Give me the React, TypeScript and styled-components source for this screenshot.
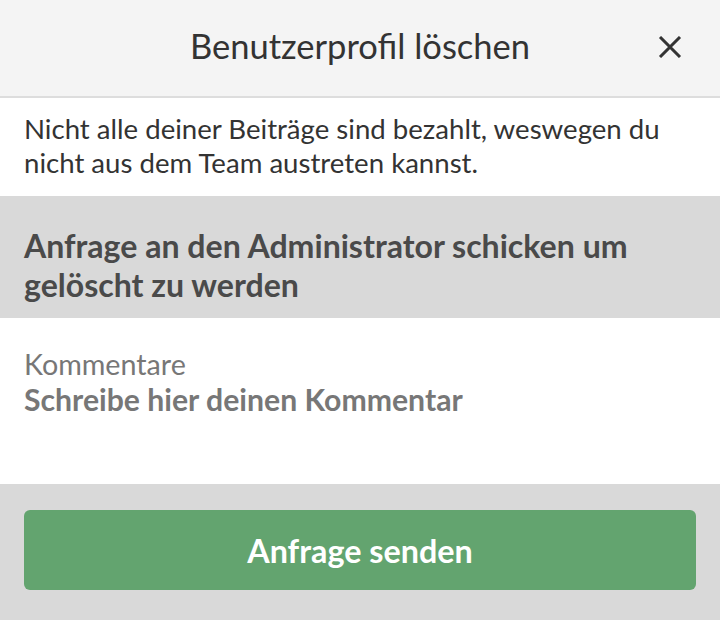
import React from "react";
import styled, { createGlobalStyle } from "styled-components";

const Global = createGlobalStyle`
  html, body { margin: 0; padding: 0; background: #fff; }
  body { font-family: Lato, "Open Sans", sans-serif; -webkit-font-smoothing: antialiased; }
  * { box-sizing: border-box; }
`;

const Dialog = styled.div`
  width: 720px;
  height: 620px;
  display: flex;
  flex-direction: column;
  background: #fff;
  overflow: hidden;
`;

const Header = styled.header`
  height: 98px;
  flex: none;
  display: grid;
  grid-template-columns: 1fr auto 1fr;
  align-items: center;
  background: #f4f4f4;
  border-bottom: 2px solid #dddddd;
`;

const Title = styled.h1`
  grid-column: 2;
  margin: 0 0 6px;
  text-align: center;
  font-family: Lato, sans-serif;
  font-weight: 400;
  font-size: 34.5px;
  line-height: normal;
  color: #333;
`;

const CloseButton = styled.button`
  grid-column: 3;
  justify-self: end;
  width: 40px;
  height: 40px;
  margin: 0 30px 2px 0;
  padding: 0;
  border: none;
  background: transparent;
  display: flex;
  align-items: center;
  justify-content: center;
  cursor: pointer;
`;

const Notice = styled.p`
  margin: 0;
  height: 98px;
  flex: none;
  padding: 14px 24px 0 24px;
  font-size: 27.6px;
  line-height: 34px;
  color: #333;
`;

const RequestHeading = styled.h2`
  margin: 0;
  height: 122px;
  flex: none;
  padding: 30px 24px 0;
  background: #d9d9d9;
  font-size: 32.1px;
  font-weight: 700;
  line-height: 39px;
  color: #4a4a4a;
`;

const CommentField = styled.label`
  flex: none;
  height: 166px;
  display: flex;
  flex-direction: column;
  padding: 30px 24px 0;
`;

const FieldLabel = styled.span`
  font-size: 28.7px;
  line-height: 33px;
  color: #777;
`;

const CommentInput = styled.textarea`
  border: none;
  outline: none;
  resize: none;
  padding: 0;
  margin: 0;
  height: 80px;
  font-family: Lato, sans-serif;
  font-size: 30.2px;
  font-weight: 700;
  line-height: 36px;
  color: #333;
  background: transparent;
  &::placeholder {
    color: #777;
    opacity: 1;
  }
`;

const Footer = styled.footer`
  flex: 1;
  background: #d9d9d9;
  padding: 26px 24px;
`;

const SendButton = styled.button`
  width: 100%;
  height: 80px;
  border: none;
  border-radius: 6px;
  background: #63a46f;
  color: #fff;
  font-family: Lato, sans-serif;
  font-weight: 700;
  font-size: 32.3px;
  cursor: pointer;
`;

const CloseIcon = () => (
  <svg width="24" height="22" viewBox="0 0 24 22" fill="none">
    <path d="M2 1 L22 21 M22 1 L2 21" stroke="#333" strokeWidth="3" />
  </svg>
);

export default function App() {
  return (
    <>
      <Global />
      <Dialog>
        <Header>
          <Title>Benutzerprofil löschen</Title>
          <CloseButton aria-label="Schließen">
            <CloseIcon />
          </CloseButton>
        </Header>
        <Notice>
          Nicht alle deiner Beiträge sind bezahlt, weswegen du nicht aus dem Team austreten kannst.
        </Notice>
        <RequestHeading>Anfrage an den Administrator schicken um gelöscht zu werden</RequestHeading>
        <CommentField>
          <FieldLabel>Kommentare</FieldLabel>
          <CommentInput placeholder="Schreibe hier deinen Kommentar" />
        </CommentField>
        <Footer>
          <SendButton>Anfrage senden</SendButton>
        </Footer>
      </Dialog>
    </>
  );
}
